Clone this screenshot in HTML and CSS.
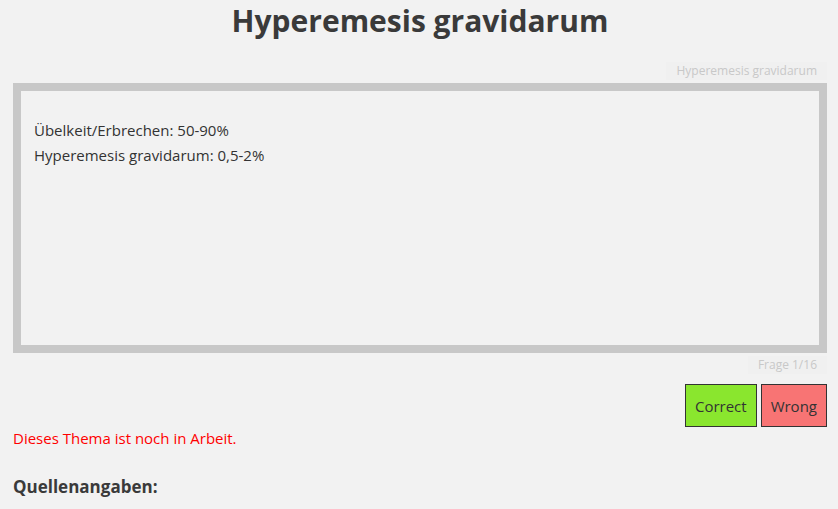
FILE: index.html
```html
<!DOCTYPE html>
<html lang="de">

<head>
    <meta charset="UTF-8">
    <meta name="viewport" content="width=device-width, initial-scale=1.0">
    <title>Hyperemesis gravidarum</title>
    <link rel="stylesheet" href="styles.css">
</head>

<body>
    <h1 class="title">Hyperemesis gravidarum</h1>

    <div class="quiz">
        <div class="topic-row">
            <span class="topic">Hyperemesis gravidarum</span>
        </div>

        <!-- Karte mit der Frage -->
        <div class="card">
            <p>Übelkeit/Erbrechen: 50-90%<br>Hyperemesis gravidarum: 0,5-2%</p>
        </div>

        <div class="count-row">
            <span class="count">Frage 1/16</span>
        </div>

        <div class="answers">
            <button type="button" class="btn-correct">Correct</button>
            <button type="button" class="btn-wrong">Wrong</button>
        </div>
    </div>

    <p class="notice">Dieses Thema ist noch in Arbeit.</p>

    <h3 class="sources">Quellenangaben:</h3>
</body>

</html>
```

FILE: styles.css
```css
html {
    font-size: 10px;
}

body {
    margin: 0;
    padding: 0 11px 0 13px;
    background: #f2f2f2;
    color: #333;
    font-family: "Open Sans", "Noto Sans", sans-serif;
    font-size: 1.5rem;
}

button {
    cursor: pointer;
    font-family: inherit;
}

.title {
    margin: 0;
    padding-top: 1px;
    text-align: center;
    font-size: 3rem;
    line-height: 4rem;
    font-weight: 700;
    color: #3a3a3a;
}

/* kleines Label oben rechts */
.topic-row {
    display: flex;
    justify-content: flex-end;
    margin-top: 21px;
}

.topic {
    background: #f0f0f0;
    color: #c8c8c8;
    font-size: 1.2rem;
    line-height: 1.8rem;
    padding: 0 10px;
}

.card {
    margin-top: 3px;
    height: 254px;
    border: 8px solid #c8c8c8;
    background: #f2f2f2;
}

.card p {
    margin: 0;
    padding: 27px 13px;
    line-height: 2.5rem;
    color: #333;
}

.count-row {
    display: flex;
    justify-content: flex-end;
    margin-top: 3px;
}

.count {
    background: #f0f0f0;
    color: #c8c8c8;
    font-size: 1.2rem;
    line-height: 1.8rem;
    padding: 0 10px;
}

.answers {
    display: flex;
    justify-content: flex-end;
    gap: 4px;
    margin-top: 10px;
}

.answers button {
    height: 43px;
    border: 1px solid #333;
    color: #333;
    font-size: 1.5rem;
    padding: 0 9px;
}

.btn-correct {
    background: #8ae62e;
}

.btn-wrong {
    background: #f87474;
}

.notice {
    margin: 0;
    margin-top: 1px;
    color: #ff0000;
    line-height: 2rem;
}

.sources {
    margin: 0;
    margin-top: 27px;
    font-size: 1.7rem;
    font-weight: 700;
    color: #3a3a3a;
}
```
